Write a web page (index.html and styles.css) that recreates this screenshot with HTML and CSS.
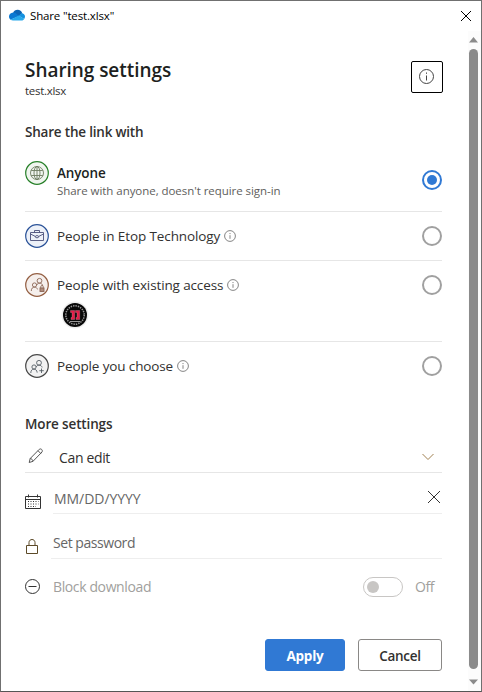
FILE: index.html
```html
<!DOCTYPE html>
<html lang="en">
<head>
<meta charset="utf-8">
<title>Share "test.xlsx"</title>
<link rel="stylesheet" href="styles.css">
</head>
<body>
<div class="window">
  <header class="titlebar">
    <svg class="cloud" width="16" height="12" viewBox="0 0 16 12">
      <path d="M4 4.200C4.800 1.800 6.600.8 8.600.8c2.300 0 4 1.400 4.600 3.500L9 8z" fill="#0c64b5"/>
      <path d="M4.200 3.400C1.700 3.600 0 5.300 0 7.600c0 1.300.6 2.400 1.500 3.100L10 6.900 6.500 4c-.7-.5-1.500-.7-2.300-.6z" fill="#0a78d2"/>
      <path d="M9.700 6.800l2-1.900c.7-.7 1.500-.8 2.100-.5C15.200 4.900 16 6 16 7.500c0 1-.3 1.800-.8 2.400z" fill="#1490df"/>
      <path d="M1.500 10.700C2.300 11.200 3 11.400 4 11.400h8.600c1.200 0 2.100-.6 2.700-1.500L9.700 6.600z" fill="#28a8ea"/>
    </svg>
    <span class="window-title">Share "test.xlsx"</span>
    <svg class="close" width="12" height="12" viewBox="0 0 12 12"><path d="M1 1l10 10M11 1L1 11"/></svg>
  </header>
  <div class="body">
    <main class="content">
      <div class="heading">
        <div>
          <h1>Sharing settings</h1>
          <p class="file">test.xlsx</p>
        </div>
        <button class="info-button" aria-label="Info">
          <svg width="16" height="16" viewBox="0 0 16 16"><circle cx="7.500" cy="7.500" r="7"/><path d="M7.500 6.500v5M7.500 3.500v1.300"/></svg>
        </button>
      </div>

      <h2 class="link-title">Share the link with</h2>
      <div class="option option-anyone">
        <svg class="badge green" width="24" height="24" viewBox="0 0 24 24">
          <circle class="disc" cx="12" cy="12" r="11.300"/>
          <circle cx="12" cy="12" r="6.500"/><ellipse cx="12" cy="12" rx="3" ry="6.500"/><path d="M12 5.500v13M6.200 9.500h11.600M6.200 14.500h11.600"/>
        </svg>
        <div class="option-text">
          <div class="label strong">Anyone</div>
          <div class="hint">Share with anyone, doesn't require sign-in</div>
        </div>
        <span class="radio checked"></span>
      </div>
      <div class="option option-org">
        <svg class="badge blue" width="24" height="24" viewBox="0 0 24 24">
          <circle class="disc" cx="12" cy="12" r="11.300"/>
          <path d="M5.500 8.500h13v8h-13zM9.500 8.500v-2h5v2M5.500 10l5 2.500M13.500 12.500l5-2.500"/><ellipse cx="12" cy="12.700" rx="1.700" ry="1.100"/>
        </svg>
        <div class="option-text">
          <div class="label org">People in Etop Technology</div>
          <svg class="info" width="12" height="12" viewBox="0 0 12 12"><circle cx="6" cy="6" r="5.400"/><path d="M6 5.200v3.600M6 3v1.100"/></svg>
        </div>
        <span class="radio"></span>
      </div>
      <div class="option option-existing">
        <svg class="badge brown" width="24" height="24" viewBox="0 0 24 24">
          <circle class="disc" cx="12" cy="12" r="11.300"/>
          <circle cx="9.500" cy="12" r="2.100"/><path d="M6.300 18c0-2.500 1.300-3.900 3.200-3.900 1.500 0 2.600.9 3 2.300"/>
          <circle cx="14.500" cy="7.800" r="2.400"/><path d="M11.800 12c.5-1.300 1.500-1.900 2.700-1.900 1.700 0 2.900 1 3.200 2.700"/>
          <rect x="15" y="15" width="4" height="3.500" fill="#b08c7c"/><path d="M15.800 15v-1.500c0-1.300 2.400-1.300 2.400 0V15"/>
        </svg>
        <div class="option-text">
          <div class="label existing">People with existing access</div>
          <svg class="info" width="12" height="12" viewBox="0 0 12 12"><circle cx="6" cy="6" r="5.400"/><path d="M6 5.200v3.600M6 3v1.100"/></svg>
          <svg class="avatar" width="28" height="28" viewBox="0 0 28 28">
            <circle cx="14" cy="14" r="13.500" fill="#eeeeee"/><circle cx="14" cy="14" r="12" fill="#080808"/>
            <circle cx="14" cy="14" r="9.200" fill="none" stroke="#999" stroke-width="1.500" stroke-dasharray="1.400 1" pathLength="57"/>
            <path d="M9.500 9.500h4.200v9H10v-2h1v-5H9.500zM14.500 9.500h4.200v9H15v-2h1v-5h-1.500z" fill="#e31b46" stroke="#d8a7b3" stroke-width=".3"/>
            <path d="M9 20.500h10" stroke="#bbb" stroke-width=".8"/>
          </svg>
        </div>
        <span class="radio"></span>
      </div>
      <div class="option option-choose">
        <svg class="badge gray" width="24" height="24" viewBox="0 0 24 24">
          <circle class="disc" cx="12" cy="12" r="11.300"/>
          <circle cx="9" cy="13" r="2.100"/><path d="M5.800 19c0-2.500 1.300-3.900 3.200-3.900 1.700 0 2.900 1.300 3.200 3.500"/>
          <circle cx="14" cy="8.800" r="2.400"/><path d="M11.300 13c.5-1.300 1.500-1.900 2.700-1.900 1.600 0 2.700.9 3.100 2.300M16.500 14.500v4.500M14.300 16.700h4.500"/>
        </svg>
        <div class="option-text">
          <div class="label choose">People you choose</div>
          <svg class="info" width="12" height="12" viewBox="0 0 12 12"><circle cx="6" cy="6" r="5.400"/><path d="M6 5.200v3.600M6 3v1.100"/></svg>
        </div>
        <span class="radio"></span>
      </div>

      <h2 class="more-title">More settings</h2>
      <div class="setting setting-edit">
        <svg class="pencil" width="16" height="16" viewBox="0 0 16 16"><path d="M1.200 14.500l1-4L11.300 1.300c1.600-1.300 3.900.9 2.700 2.700L5 13.300zM10 2.700l2.900 2.900M2.200 10.500c1.500.2 2.500 1.200 2.800 2.800"/></svg>
        <span class="value edit-text">Can edit</span>
        <svg class="chevron" width="12" height="8" viewBox="0 0 12 8"><path d="M.5 1L6 6.500 11.500 1"/></svg>
      </div>
      <div class="setting">
        <svg class="calendar" width="16" height="16" viewBox="0 0 16 16"><path d="M.5 2.500h15v12H.5zM.5 5.500h15M3.500.5v3M12.500.5v3"/><path class="dots" d="M3 7.500h10.500M3 10h10.500M3 12.500h8"/></svg>
        <div class="field date-field"><span class="date-text">MM/DD/YYYY</span>
          <svg class="clear" width="14" height="14" viewBox="0 0 14 14"><path d="M1 1l12 12M13 1L1 13"/></svg></div>
      </div>
      <div class="setting">
        <svg class="lock" width="12" height="15" viewBox="0 0 12 15"><path d="M.5 6.500h11v8H.5zM3 6.500V3.500c0-4 6-4 6 0v3"/></svg>
        <div class="field password-field"><span class="password-text">Set password</span></div>
      </div>
      <div class="setting setting-block">
        <svg class="minus" width="16" height="16" viewBox="0 0 16 16"><circle cx="7.500" cy="7.500" r="7"/><path d="M3.500 7.500h8"/></svg>
        <span class="block-text">Block download</span>
        <span class="toggle"></span>
        <span class="off">Off</span>
      </div>

      <footer class="actions">
        <button class="btn primary"><span>Apply</span></button>
        <button class="btn"><span>Cancel</span></button>
      </footer>
    </main>
    <div class="scrollbar">
      <svg width="9" height="6" viewBox="0 0 9 6"><path d="M0 5.500L4.500 0 9 5.500z"/></svg>
      <div class="thumb"></div>
      <svg width="9" height="6" viewBox="0 0 9 6"><path d="M0 .5L4.500 5.500 9 .5z"/></svg>
    </div>
  </div>
</div>
</body>
</html>
```
FILE: styles.css
```css
* { box-sizing: border-box; }
body { margin: 0; background: #fff; color: #323130; font: 14px/20px "Open Sans", "Noto Sans", sans-serif; }
h1, h2, p { margin: 0; }
svg { display: block; flex: none; fill: none; stroke-width: 1; }
button { font: inherit; padding: 0; background: #fff; }
span, .label, .hint, h1, h2, p { white-space: nowrap; }

.window { height: 692px; border: 1px solid #707070; border-bottom-color: #555; display: flex; flex-direction: column; }
.titlebar { height: 30px; display: flex; align-items: center; padding: 0 9px 0 8px; }
.cloud { margin-top: -3px; }
.window-title { margin-left: 5px; flex: 1; font-size: 11.500px; color: #000; letter-spacing: -.15px; }
.close { stroke: #000; margin-top: -1px; }

.body { flex: 1; display: flex; justify-content: space-between; min-height: 0; }
.content { width: 441px; padding-left: 24px; display: flex; flex-direction: column; }
.heading { height: 91px; padding-top: 25px; display: flex; justify-content: space-between; }
h1 { font-size: 19px; line-height: 28px; font-weight: 600; color: #201f1e; letter-spacing: -.05px; }
.file { font-size: 11.500px; line-height: 16px; margin-top: -1px; letter-spacing: -.3px; }
.info-button { width: 32px; height: 32px; margin: 5px -1px 0 0; border: 1px solid #000; border-radius: 2px; display: grid; place-items: center; }
.info-button svg { stroke: #444; }
h2 { font-size: 13.500px; line-height: 20px; font-weight: 600; letter-spacing: -.2px; }
.link-title { height: 27px; }

.option { display: flex; align-items: flex-start; border-bottom: 1px solid #e6e6e6; }
.option-anyone { height: 63px; padding-top: 12px; }
.option-org { height: 49px; padding-top: 12px; }
.option-existing { height: 81px; padding-top: 12px; }
.option-choose { height: 49px; padding-top: 12px; border: 0; }
.badge { stroke-width: .9; }
.badge .disc { stroke-width: 1.200; }
.green { stroke: #6c7b60; } .green .disc { stroke: #28812a; fill: #f0f5ef; }
.blue { stroke: #4b4f78; } .blue .disc { stroke: #2a5298; fill: #edf1f8; }
.brown { stroke: #8b6555; } .brown .disc { stroke: #945f43; fill: #f5efec; }
.gray { stroke: #555d65; } .gray .disc { stroke: #484848; fill: #f2f2f2; }
.option-text { flex: 1; margin-left: 8px; display: flex; flex-wrap: wrap; align-items: center; }
.label { line-height: 24px; font-size: 13.500px; letter-spacing: -.13px; }
.org { letter-spacing: -.1px; }
.strong { width: 100%; font-weight: 600; color: #201f1e; }
.hint { font-size: 11.500px; line-height: 16px; margin-top: -2px; color: #605e5c; letter-spacing: -.05px; }
.info { margin-left: 4px; stroke: #777; stroke-width: .9; }
.avatar { margin: 4px 100% 0 4px; }
.radio { width: 20px; height: 20px; flex: none; border: 2px solid #a0a0a0; border-radius: 50%; margin-top: 2px; }
.option-anyone .radio { margin-top: 9px; }
.checked { border-color: #3079d4; padding: 3px; background: #3079d4 content-box; }

.more-title { margin-top: 23px; letter-spacing: -.14px; }
.setting { display: flex; align-items: flex-start; }
.setting-edit { height: 39px; border-bottom: 1px solid #e6e6e6; padding-top: 14px; }
.pencil { margin-left: 3px; stroke: #555; }
.edit-text { margin: 0 auto 0 15px; letter-spacing: -.35px; }
.chevron { margin: 5px 8px 0 0; stroke: #a08050; }
.calendar { margin-top: 21px; stroke: #333; }
.dots { stroke-dasharray: 1 1.500; }
.field { flex: 1; border-bottom: 1px solid #eee; color: #666; display: flex; justify-content: space-between; align-items: flex-start; }
.date-field { height: 41px; margin-left: 12px; padding-top: 16px; }
.date-text { margin-left: 1px; letter-spacing: -.05px; }
.clear { stroke: #333; margin: 1px 1px 0 0; }
.lock { margin: 25px 0 0 1px; stroke: #5c4a28; }
.password-field { height: 45px; padding-top: 19px; margin-left: 13px; }
.password-text { margin-left: 2px; letter-spacing: -.45px; }
.setting-block { height: 80px; padding-top: 18px; color: #a19f9d; }
.minus { margin-top: 2px; stroke: #333; }
.block-text { margin-left: 12px; flex: 1; letter-spacing: -.38px; }
.toggle { width: 40px; height: 20px; border: 1px solid #c8c6c4; border-radius: 10px; padding: 3px; }
.toggle::before { content: ""; display: block; width: 12px; height: 12px; border-radius: 50%; background: #c8c6c4; }
.off { width: 27px; margin-left: 12px; letter-spacing: -.4px; }

.actions { display: flex; justify-content: flex-end; gap: 13px; }
.btn { width: 84px; height: 32px; border: 1px solid #8a8886; border-radius: 3px; color: #323130; font-size: 13.500px; font-weight: 600; line-height: 22px; padding-top: 1px; letter-spacing: -.25px; }
.primary { width: 80px; background: #3079d4; border-color: #3079d4; color: #fff; font-weight: 700; }

.scrollbar { width: 13px; padding: 6px 3px 6px 1px; background: #fcfcfc; display: flex; flex-direction: column; align-items: center; gap: 6px; }
.scrollbar svg { fill: #8b8b8b; }
.thumb { flex: 1; width: 9px; border-radius: 4.500px; background: #8b8b8b; margin-bottom: 4px; }
```
